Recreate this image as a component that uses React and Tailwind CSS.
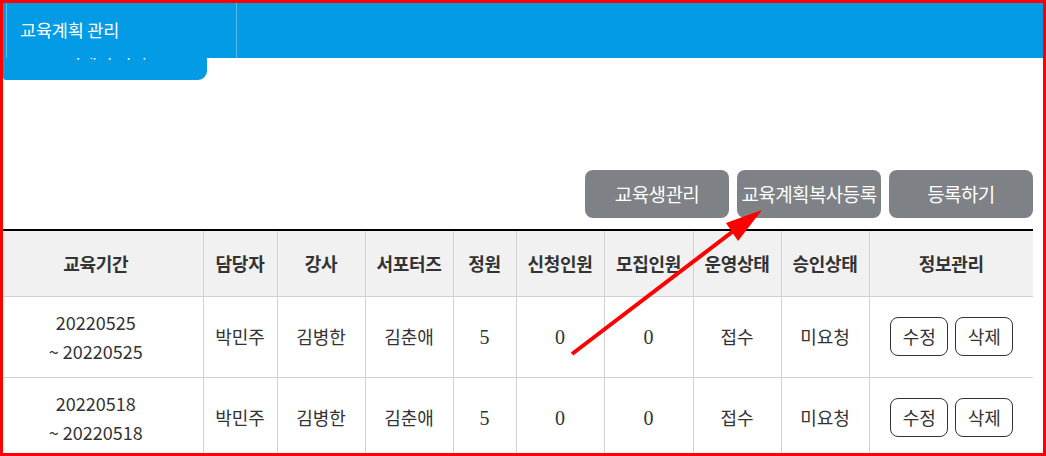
import React from "react";

const cols = [200, 74, 88, 88, 63, 88, 89, 88, 88, 164];
const heads = ["교육기간", "담당자", "강사", "서포터즈", "정원", "신청인원", "모집인원", "운영상태", "승인상태", "정보관리"];

const rows = [
  { from: "20220525", to: "20220525" },
  { from: "20220518", to: "20220518" },
];

const kr = { fontFamily: '"Noto Sans CJK KR", "Noto Sans", sans-serif' };
const serif = { fontFamily: '"Liberation Serif", serif' };

export default function App() {
  return (
    <div
      className="relative w-[1046px] h-[456px] box-border border-[3px] border-[#ff0000] bg-white overflow-hidden"
      style={kr}
    >
      {/* TOP BAR */}
      <div className="h-[55px] bg-[#039be5] flex">
        <div className="ml-[3px] w-[231px] border-l border-r border-[#5cbbec] flex items-center pl-[13px] text-white text-[17.5px] tracking-[-0.2px]">
          교육계획 관리
        </div>
      </div>

      {/* DROPDOWN TAB (text mostly hidden under the bar) */}
      <div className="w-[204px] h-[22px] bg-[#039be5] rounded-br-[9px] rounded-bl-[3px] overflow-hidden">
        <div className="-mt-[18px] pl-[47px] text-white text-[17px] leading-[22px] whitespace-nowrap">
          교육계획 목록
        </div>
      </div>

      {/* ACTION BUTTONS */}
      <div className="mt-[90px] flex justify-end gap-[8px] pr-[10px]">
        {["교육생관리", "교육계획복사등록", "등록하기"].map((t) => (
          <button
            key={t}
            className="w-[144px] h-[48px] rounded-[8px] bg-[#7e8185] text-white text-[19px] whitespace-nowrap tracking-[-0.6px] overflow-visible"
          >
            {t}
          </button>
        ))}
      </div>

      {/* TABLE */}
      <table className="mt-[11px] w-[1030px] table-fixed border-collapse border-t-2 border-black text-[#333]">
        <colgroup>
          {cols.map((w, i) => (
            <col key={i} style={{ width: w }} />
          ))}
        </colgroup>
        <thead>
          <tr className="h-[66px] bg-[#f1f1f1]">
            {heads.map((h, i) => (
              <th
                key={h}
                className={`text-[18px] font-bold text-[#333] tracking-[-0.3px] whitespace-nowrap border-b border-[#d2d2d2] ${
                  i > 0 ? "border-l" : "pr-[14px]"
                }`}
              >
                {h}
              </th>
            ))}
          </tr>
        </thead>
        <tbody>
          {rows.map((r, idx) => (
            <tr key={idx} className="h-[81px] text-center text-[18px]">
              <td className="border-b border-[#d2d2d2] leading-[29px] pr-[14px]">
                {r.from}
                <br />~ {r.to}
              </td>
              <td className="border-l border-b border-[#d2d2d2]">박민주</td>
              <td className="border-l border-b border-[#d2d2d2]">김병한</td>
              <td className="border-l border-b border-[#d2d2d2]">김춘애</td>
              <td className="border-l border-b border-[#d2d2d2] text-[20px]" style={serif}>5</td>
              <td className="border-l border-b border-[#d2d2d2] text-[20px]" style={serif}>0</td>
              <td className="border-l border-b border-[#d2d2d2] text-[20px]" style={serif}>0</td>
              <td className="border-l border-b border-[#d2d2d2]">접수</td>
              <td className="border-l border-b border-[#d2d2d2]">미요청</td>
              <td className="border-l border-b border-[#d2d2d2]">
                <div className="flex justify-center gap-[7px] pl-[1px]">
                  <button className="w-[58px] h-[39px] rounded-[8px] border border-[#333] text-[18px] bg-white">
                    수정
                  </button>
                  <button className="w-[58px] h-[39px] rounded-[8px] border border-[#333] text-[18px] bg-white">
                    삭제
                  </button>
                </div>
              </td>
            </tr>
          ))}
        </tbody>
      </table>

      {/* ANNOTATION ARROW */}
      <svg
        className="absolute left-[-3px] top-[-3px] pointer-events-none"
        width="1046"
        height="456"
      >
        <line x1="572" y1="354" x2="740" y2="226" stroke="#ff0000" strokeWidth="4" />
        <polygon points="762,210 726,223 738,241" fill="#ff0000" />
      </svg>
    </div>
  );
}
